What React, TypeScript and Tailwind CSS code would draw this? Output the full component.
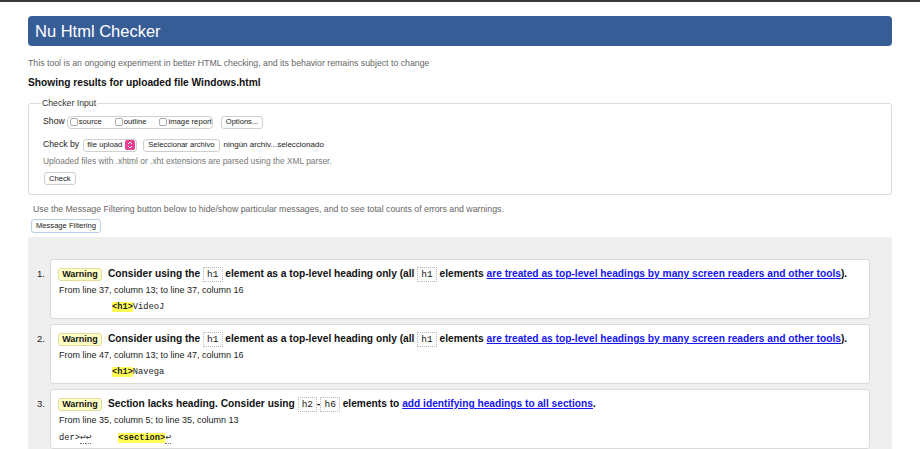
const SANS = 'font-["Liberation_Sans",Arial,sans-serif]';

function Code({ children }: { children: React.ReactNode }) {
  return (
    <code className='inline-block border border-dotted border-[#b8b8b8] bg-[#fcfcfc] px-[3px] font-["Liberation_Mono",monospace] text-[9.5px] font-normal leading-[13px] text-[#222]'>
      {children}
    </code>
  );
}

function Hl({ children }: { children: React.ReactNode }) {
  return <b className="bg-[#ffff55] font-bold">{children}</b>;
}

function Ret() {
  return <span className="border-b border-dotted border-[#777] text-[9.5px]">↩</span>;
}

function Link({ children }: { children: React.ReactNode }) {
  return <a className="text-[#1515f0] underline underline-offset-1">{children}</a>;
}

function Warning() {
  return (
    <span className="inline-flex h-[13px] w-[44px] shrink-0 items-center justify-center rounded-[3px] border border-[#e3dc9a] bg-[#ffffc6] text-[9px] font-bold text-[#111]">
      Warning
    </span>
  );
}

type Msg = {
  n: number;
  text: React.ReactNode;
  loc: string;
  extract: React.ReactNode;
};

const messages: Msg[] = [
  {
    n: 1,
    text: (
      <>
        Consider using the <Code>h1</Code> element as a top-level heading only (all <Code>h1</Code> elements{' '}
        <Link>are treated as top-level headings by many screen readers and other tools</Link>).
      </>
    ),
    loc: 'From line 37, column 13; to line 37, column 16',
    extract: (
      <span className="pl-[53px]">
        <Hl>&lt;h1&gt;</Hl>VideoJ
      </span>
    ),
  },
  {
    n: 2,
    text: (
      <>
        Consider using the <Code>h1</Code> element as a top-level heading only (all <Code>h1</Code> elements{' '}
        <Link>are treated as top-level headings by many screen readers and other tools</Link>).
      </>
    ),
    loc: 'From line 47, column 13; to line 47, column 16',
    extract: (
      <span className="pl-[53px]">
        <Hl>&lt;h1&gt;</Hl>Navega
      </span>
    ),
  },
  {
    n: 3,
    text: (
      <>
        Section lacks heading. Consider using <Code>h2</Code>-<Code>h6</Code> elements to{' '}
        <Link>add identifying headings to all sections</Link>.
      </>
    ),
    loc: 'From line 35, column 5; to line 35, column 13',
    extract: (
      <span>
        der&gt;<Ret />
        <Ret />
        <span className="inline-block w-[27px]" />
        <Hl>&lt;section&gt;</Hl>
        <Ret />
      </span>
    ),
  },
];

function Checkbox({ label }: { label: string }) {
  return (
    <span className="flex items-center whitespace-nowrap">
      <span className="mr-[1px] h-[8px] w-[8px] rounded-[2px] border border-[#aaa] bg-white" />
      <span>{label}</span>
    </span>
  );
}

function Btn({ children, className = '' }: { children: React.ReactNode; className?: string }) {
  return (
    <button
      className={`flex h-[13px] items-center whitespace-nowrap rounded-[3px] border border-[#cfcfcf] bg-white px-[4px] text-[7.6px] leading-none text-[#222] ${className}`}
    >
      {children}
    </button>
  );
}

export default function App() {
  return (
    <div className={`${SANS} h-[449px] w-[920px] overflow-hidden bg-white text-[#222]`}>
      <div className="h-[2px] bg-[#3a3a3a]" />
      <div className="mx-[28px]">
        <h1 className="mt-[14px] flex h-[30px] items-center rounded-[4px] bg-[#375d97] pl-[7px] text-[16.5px] font-normal text-white">
          Nu Html Checker
        </h1>
        <p className="mt-[12px] text-[8.75px] leading-[11px] text-[#666]">
          This tool is an ongoing experiment in better HTML checking, and its behavior remains subject to change
        </p>
        <h2 className="mt-[8px] text-[10.2px] font-bold leading-[12px] text-[#111]">
          Showing results for uploaded file Windows.html
        </h2>

        <fieldset className="mt-[8px] rounded-[3px] border border-[#dcdcdc] pb-[9px] pl-[14px] pt-[7px]">
          <legend className="ml-[-2px] px-[1px] text-[8.7px] leading-[12px] text-[#333]">Checker Input</legend>
          <div className="flex h-[12px] items-center text-[8.7px]">
            <span className="mr-[2px]">Show</span>
            <span className="flex h-[13px] w-[146px] items-center gap-[13px] rounded-[4px] border border-[#cfcfcf] pl-[2px] text-[7.7px]">
              <Checkbox label="source" />
              <Checkbox label="outline" />
              <Checkbox label="image report" />
            </span>
            <Btn className="ml-[8px]">Options...</Btn>
          </div>
          <div className="mt-[11px] flex h-[12px] items-center text-[8.7px]">
            <span className="mr-[4px]">Check by</span>
            <span className="flex h-[13px] w-[54px] items-center justify-between whitespace-nowrap rounded-[3px] border border-[#cfcfcf] bg-white pl-[3px] pr-[1px] text-[7.7px]">
              file upload
              <span className="flex h-[10px] w-[10px] shrink-0 flex-col items-center justify-center rounded-[2px] bg-[#ea3f92]">
                <svg width="6" height="8" viewBox="0 0 6 8" fill="none" stroke="white" strokeWidth="1">
                  <path d="M1 3 L3 1 L5 3 M1 5 L3 7 L5 5" />
                </svg>
              </span>
            </span>
            <Btn className="ml-[6px]">Seleccionar archivo</Btn>
            <span className="ml-[4px] whitespace-nowrap text-[8px]">ningún archiv...seleccionado</span>
          </div>
          <p className="mt-[5px] text-[8.4px] leading-[11px] text-[#777]">
            Uploaded files with .xhtml or .xht extensions are parsed using the XML parser.
          </p>
          <Btn className="ml-[1px] mt-[5px]">Check</Btn>
        </fieldset>

        <p className="ml-[5px] mt-[9px] text-[8.75px] leading-[11px] text-[#666]">
          Use the Message Filtering button below to hide/show particular messages, and to see total counts of errors and warnings.
        </p>
        <button className="ml-[3px] mt-[4px] flex h-[14px] items-center rounded-[3px] border border-[#b9cfee] bg-white px-[4px] text-[7.6px] leading-none text-[#222]">
          Message Filtering
        </button>

        <div className="mt-[4px] flex h-[300px] flex-col gap-[5px] bg-[#efefef] pl-[9px] pr-[22px] pt-[22px]">
          {messages.map((m) => (
            <div key={m.n} className="flex">
              <span className="w-[13px] shrink-0 pt-[9px] text-[9.5px] leading-[11px]">{m.n}.</span>
              <div className="h-[60px] flex-1 rounded-[3px] border border-[#dadada] bg-white pl-[7px] pt-[7px]">
                <div className="flex items-center gap-[6px]">
                  <Warning />
                  <span className="whitespace-nowrap text-[10.2px] font-bold leading-[13px] text-[#111]">{m.text}</span>
                </div>
                <p className="mt-[3px] pl-[1px] text-[9px] leading-[11px]">{m.loc}</p>
                <pre className='mt-[6px] pl-[1px] font-["Liberation_Mono",monospace] text-[8.7px] leading-[11px] text-[#222]'>
                  {m.extract}
                </pre>
              </div>
            </div>
          ))}
        </div>
      </div>
    </div>
  );
}
